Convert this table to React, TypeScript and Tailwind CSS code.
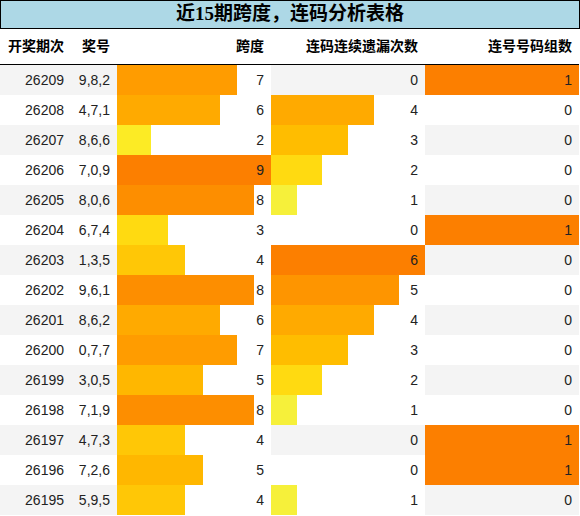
import React from "react";

type Row = [number, string, number, number, number];

const rows: Row[] = [
  [26209, "9,8,2", 7, 0, 1],
  [26208, "4,7,1", 6, 4, 0],
  [26207, "8,6,6", 2, 3, 0],
  [26206, "7,0,9", 9, 2, 0],
  [26205, "8,0,6", 8, 1, 0],
  [26204, "6,7,4", 3, 0, 1],
  [26203, "1,3,5", 4, 6, 0],
  [26202, "9,6,1", 8, 5, 0],
  [26201, "8,6,2", 6, 4, 0],
  [26200, "0,7,7", 7, 3, 0],
  [26199, "3,0,5", 5, 2, 0],
  [26198, "7,1,9", 8, 1, 0],
  [26197, "4,7,3", 4, 0, 1],
  [26196, "7,2,6", 5, 0, 1],
  [26195, "5,9,5", 4, 1, 0],
];

// matplotlib "Wistia" colormap stops
const stops: [number, number, number, number][] = [
  [0.0, 0.8941176470588236, 1.0, 0.47843137254901963],
  [0.25, 1.0, 0.9098039215686274, 0.10196078431372549],
  [0.5, 1.0, 0.7411764705882353, 0.0],
  [0.75, 1.0, 0.6274509803921569, 0.0],
  [1.0, 0.9882352941176471, 0.4980392156862745, 0.0],
];

function wistia(t: number): string {
  const x = Math.max(0, Math.min(1, t));
  for (let i = 0; i < stops.length - 1; i++) {
    const a = stops[i];
    const b = stops[i + 1];
    if (x >= a[0] && x <= b[0]) {
      const f = (x - a[0]) / (b[0] - a[0]);
      const r = Math.round((a[1] + (b[1] - a[1]) * f) * 255);
      const g = Math.round((a[2] + (b[2] - a[2]) * f) * 255);
      const bl = Math.round((a[3] + (b[3] - a[3]) * f) * 255);
      return `rgb(${r},${g},${bl})`;
    }
  }
  return "rgb(252,127,0)";
}

function barStyle(v: number, max: number): React.CSSProperties {
  if (v <= 0) return {};
  const pct = (v / max) * 100;
  const c = wistia(v / max);
  return {
    background: `linear-gradient(90deg, ${c} ${pct}%, transparent ${pct}%)`,
  };
}

const max3 = Math.max(...rows.map((r) => r[2]));
const max4 = Math.max(...rows.map((r) => r[3]));
const max5 = Math.max(...rows.map((r) => r[4]));

const cell = "flex items-center justify-end pr-[7px] h-[30px]";

export default function App() {
  return (
    <div
      className="w-[580px] h-[516px] bg-white text-[#222] overflow-hidden"
      style={{ fontFamily: '"Liberation Sans", "Noto Sans CJK SC", sans-serif' }}
    >
      <div
        className="h-[29px] border border-black bg-[#add8e6] flex items-center justify-center text-[19px] font-bold text-black"
        style={{ fontFamily: '"Liberation Serif", "Noto Sans CJK SC", serif' }}
      >
        近15期跨度，连码分析表格
      </div>
      <div className="w-[579px] grid grid-cols-[71px_46px_154px_154px_154px] text-[14px]">
        <div className="contents font-bold text-black">
          <div className="flex items-center justify-end pr-[7px] h-[36px] border-b border-black">开奖期次</div>
          <div className="flex items-center justify-end pr-[7px] h-[36px] border-b border-black">奖号</div>
          <div className="flex items-center justify-end pr-[7px] h-[36px] border-b border-black">跨度</div>
          <div className="flex items-center justify-end pr-[7px] h-[36px] border-b border-black">连码连续遗漏次数</div>
          <div className="flex items-center justify-end pr-[7px] h-[36px] border-b border-black">连号号码组数</div>
        </div>
        {rows.map((r, i) => (
          <div key={r[0]} className={i % 2 === 0 ? "contents [&>div]:bg-[#f4f4f4]" : "contents [&>div]:bg-white"}>
            <div className={cell}>{r[0]}</div>
            <div className={cell}>{r[1]}</div>
            <div className={cell} style={barStyle(r[2], max3)}>{r[2]}</div>
            <div className={cell} style={barStyle(r[3], max4)}>{r[3]}</div>
            <div className={cell} style={barStyle(r[4], max5)}>{r[4]}</div>
          </div>
        ))}
      </div>
    </div>
  );
}
